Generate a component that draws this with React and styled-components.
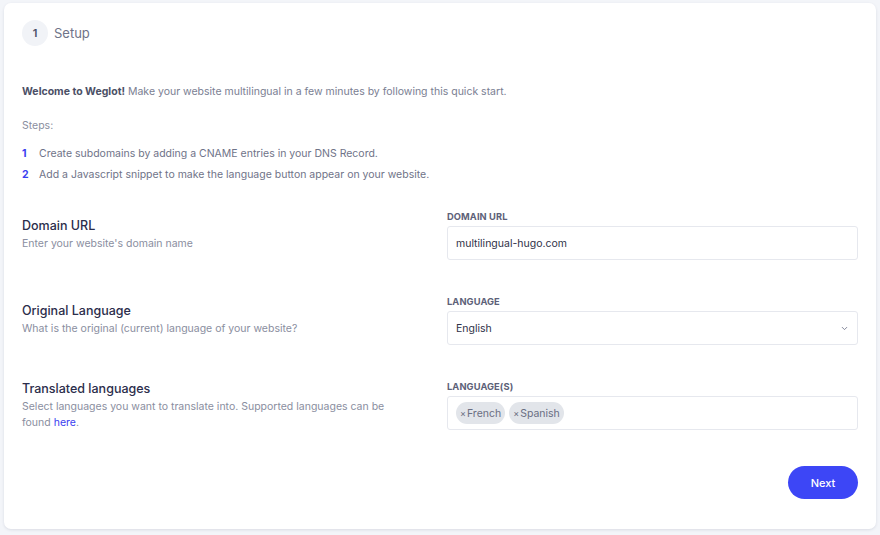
import React from "react";
import styled, { createGlobalStyle } from "styled-components";

const GlobalStyle = createGlobalStyle`
  html, body {
    margin: 0;
    padding: 0;
    background: #f3f5f9;
    font-family: Inter, "Noto Sans", sans-serif;
  }
  * { box-sizing: border-box; }
`;

const Page = styled.div`
  padding: 3px 4px 6px 4px;
`;

const Card = styled.div`
  background: #fff;
  border-radius: 7px;
  box-shadow: 0 1px 3px rgba(40, 50, 80, 0.12);
  padding: 17px 18px 29px 18px;
  height: 526px;
`;

const Header = styled.div`
  display: flex;
  align-items: center;
  gap: 6px;
`;

const StepCircle = styled.div`
  width: 26px;
  height: 26px;
  border-radius: 50%;
  background: #f1f3f7;
  color: #4b4f66;
  font-size: 11px;
  font-weight: 600;
  display: flex;
  align-items: center;
  justify-content: center;
`;

const StepTitle = styled.span`
  font-size: 13px;
  color: #6f7388;
`;

const Intro = styled.p`
  margin: 39px 0 0 0;
  font-size: 10.5px;
  color: #7a7e92;
  line-height: 14px;
  b {
    color: #4b4f66;
    font-weight: 700;
  }
`;

const StepsLabel = styled.p`
  margin: 20px 0 0 0;
  font-size: 10.5px;
  color: #8a8ea0;
  line-height: 14px;
`;

const StepList = styled.ol`
  list-style: none;
  margin: 14px 0 0 0;
  padding: 0;
  display: flex;
  flex-direction: column;
  gap: 7px;
`;

const StepItem = styled.li`
  display: flex;
  font-size: 10.5px;
  line-height: 14px;
  color: #6f7388;
  span {
    color: #3a40f0;
    font-weight: 700;
    width: 17px;
  }
`;

const Form = styled.div`
  margin-top: 29px;
  display: flex;
  flex-direction: column;
  gap: 36px;
`;

const Row = styled.div`
  display: grid;
  grid-template-columns: 1fr 411px;
  column-gap: 37px;
`;

const Info = styled.div`
  padding-top: ${(p) => p.$offset}px;
`;

const Title = styled.h3`
  margin: 0;
  font-size: 12.5px;
  font-weight: 500;
  color: #2b2d4b;
  line-height: 16px;
`;

const Desc = styled.p`
  margin: 2px 0 0 0;
  font-size: 10.5px;
  line-height: 16px;
  color: #8a8ea0;
  max-width: 372px;
  a {
    color: #3a40f0;
    text-decoration: none;
  }
`;

const Field = styled.div`
  display: flex;
  flex-direction: column;
`;

const Label = styled.label`
  font-size: 9.3px;
  font-weight: 700;
  letter-spacing: 0.1px;
  color: #5d6178;
  text-transform: uppercase;
  line-height: 12px;
  margin-bottom: 3px;
`;

const Box = styled.div`
  height: 34px;
  border: 1px solid #e6e8ee;
  border-radius: 3px;
  display: flex;
  align-items: center;
  justify-content: space-between;
  padding: 0 8px;
  font-size: 10.5px;
  color: #2f3147;
  gap: 4px;
`;

const Tags = styled.div`
  display: flex;
  gap: 4px;
`;

const Tag = styled.span`
  background: #e2e5ea;
  color: #6a6e82;
  border-radius: 11px;
  height: 22px;
  padding: 0 4px;
  display: flex;
  align-items: center;
  font-size: 10.5px;
  i {
    font-style: normal;
    font-size: 9px;
    margin-right: 1px;
  }
`;

const Footer = styled.div`
  display: flex;
  justify-content: flex-end;
  margin-top: 35px;
`;

const NextButton = styled.button`
  width: 70px;
  height: 33px;
  border: none;
  border-radius: 17px;
  background: #3d46f6;
  color: #fff;
  font-family: inherit;
  font-size: 11px;
  font-weight: 500;
  cursor: pointer;
`;

const Chevron = () => (
  <svg width="9" height="9" viewBox="0 0 24 24" fill="none" stroke="#7c8094" strokeWidth="2.5" strokeLinecap="round" strokeLinejoin="round">
    <path d="M6 9l6 6 6-6" />
  </svg>
);

export default function App() {
  return (
    <>
      <GlobalStyle />
      <Page>
        <Card>
          <Header>
            <StepCircle>1</StepCircle>
            <StepTitle>Setup</StepTitle>
          </Header>
          <Intro>
            <b>Welcome to Weglot!</b> Make your website multilingual in a few minutes by following this quick start.
          </Intro>
          <StepsLabel>Steps:</StepsLabel>
          <StepList>
            <StepItem><span>1</span>Create subdomains by adding a CNAME entries in your DNS Record.</StepItem>
            <StepItem><span>2</span>Add a Javascript snippet to make the language button appear on your website.</StepItem>
          </StepList>
          <Form>
            <Row>
              <Info $offset={7}>
                <Title>Domain URL</Title>
                <Desc>Enter your website's domain name</Desc>
              </Info>
              <Field>
                <Label>Domain URL</Label>
                <Box>multilingual-hugo.com</Box>
              </Field>
            </Row>
            <Row>
              <Info $offset={7}>
                <Title>Original Language</Title>
                <Desc>What is the original (current) language of your website?</Desc>
              </Info>
              <Field>
                <Label>Language</Label>
                <Box>English<Chevron /></Box>
              </Field>
            </Row>
            <Row>
              <Info $offset={0}>
                <Title>Translated languages</Title>
                <Desc>
                  Select languages you want to translate into. Supported languages can be found <a href="#">here</a>.
                </Desc>
              </Info>
              <Field>
                <Label>Language(s)</Label>
                <Box>
                  <Tags>
                    <Tag><i>×</i>French</Tag>
                    <Tag><i>×</i>Spanish</Tag>
                  </Tags>
                </Box>
              </Field>
            </Row>
          </Form>
          <Footer>
            <NextButton>Next</NextButton>
          </Footer>
        </Card>
      </Page>
    </>
  );
}
